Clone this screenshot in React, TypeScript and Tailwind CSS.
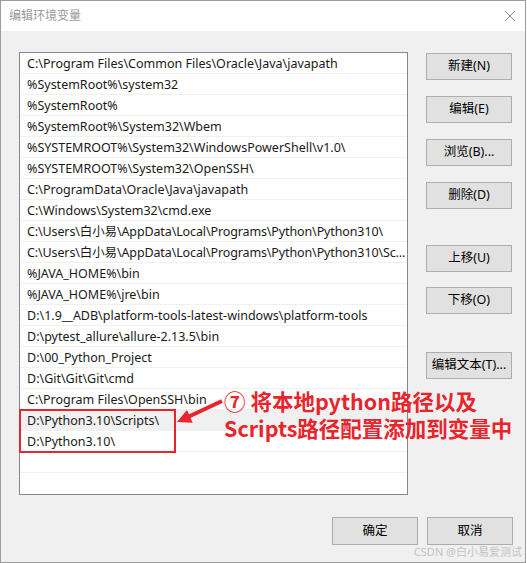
import React from "react";

const rows = [
  "C:\\Program Files\\Common Files\\Oracle\\Java\\javapath",
  "%SystemRoot%\\system32",
  "%SystemRoot%",
  "%SystemRoot%\\System32\\Wbem",
  "%SYSTEMROOT%\\System32\\WindowsPowerShell\\v1.0\\",
  "%SYSTEMROOT%\\System32\\OpenSSH\\",
  "C:\\ProgramData\\Oracle\\Java\\javapath",
  "C:\\Windows\\System32\\cmd.exe",
  "C:\\Users\\白小易\\AppData\\Local\\Programs\\Python\\Python310\\",
  "C:\\Users\\白小易\\AppData\\Local\\Programs\\Python\\Python310\\Sc...",
  "%JAVA_HOME%\\bin",
  "%JAVA_HOME%\\jre\\bin",
  "D:\\1.9__ADB\\platform-tools-latest-windows\\platform-tools",
  "D:\\pytest_allure\\allure-2.13.5\\bin",
  "D:\\00_Python_Project",
  "D:\\Git\\Git\\Git\\cmd",
  "C:\\Program Files\\OpenSSH\\bin",
  "D:\\Python3.10\\Scripts\\",
  "D:\\Python3.10\\",
  "",
];

function Btn({ label, className = "" }: { label: string; className?: string }) {
  return (
    <div
      className={`w-[86px] h-[27px] border border-[#adadad] bg-[#e1e1e1] flex items-center justify-center text-[12.5px] text-black ${className}`}
    >
      {label}
    </div>
  );
}

export default function App() {
  return (
    <div
      className="w-[527px] h-[563px] bg-white relative overflow-hidden"
      style={{ fontFamily: '"Noto Sans", "Noto Sans CJK SC", sans-serif' }}
    >
      <div className="w-[526px] h-[563px] border border-[#9c9c9c] flex flex-col bg-[#f0f0f0] relative">
        <div className="h-[30px] bg-white flex items-center justify-between pl-[8px] pr-[8px]">
          <span className="text-[12px] text-[#9a9a9a]">编辑环境变量</span>
          <svg width="12" height="12" viewBox="0 0 12 12" className="mr-[1px]">
            <path d="M1 1 L11 11 M11 1 L1 11" stroke="#8a8a8a" strokeWidth="1" fill="none" />
          </svg>
        </div>
        <div className="flex pl-[18px] pt-[21px] pr-[12px]">
          <div className="w-[389px] h-[443px] border border-[#828790] bg-white overflow-hidden">
            {rows.map((r, i) => (
              <div
                key={i}
                className={`h-[21px] border-b border-[#f0f0f0] pl-[7px] pt-[2px] flex items-center text-[12.5px] text-[#1a1a1a] whitespace-nowrap overflow-hidden ${
                  i === 17 ? "bg-[#f0f0f0]" : ""
                } ${i === 8 || i === 9 ? "tracking-[-0.12px]" : ""}`}
              >
                {r}
              </div>
            ))}
          </div>
          <div className="ml-[18px] flex flex-col pt-[1px]">
            <Btn label="新建(N)" />
            <Btn label="编辑(E)" className="mt-[16px]" />
            <Btn label="浏览(B)..." className="mt-[16px]" />
            <Btn label="删除(D)" className="mt-[16px]" />
            <Btn label="上移(U)" className="mt-[36px]" />
            <Btn label="下移(O)" className="mt-[15px]" />
            <Btn label="编辑文本(T)..." className="mt-[38px]" />
          </div>
        </div>
        <div className="flex justify-end gap-[9px] pr-[12px] mt-[22px]">
          <Btn label="确定" className="h-[28px]" />
          <Btn label="取消" className="h-[28px]" />
        </div>
        <div className="absolute right-[3px] bottom-[3px] text-[11px] leading-[14px] text-[#c4c4c4]">
          CSDN @白小易爱测试
        </div>
      </div>

      {/* annotation overlay */}
      <div className="absolute left-[19px] top-[409px] w-[157px] h-[44px] border-2 border-[#e8242c]" />
      <svg className="absolute left-0 top-0" width="527" height="563" viewBox="0 0 527 563">
        <line x1="222" y1="401" x2="189" y2="416.5" stroke="#e8242c" strokeWidth="4" />
        <polygon points="177,422 187,409.9 192.7,422.7" fill="#e8242c" />
      </svg>
      <div
        className="absolute left-[224px] top-[387px] text-[21.5px] font-bold text-[#e8242c] whitespace-nowrap flex flex-col"
        style={{ fontFamily: '"Noto Sans CJK SC", sans-serif' }}
      >
        <span className="leading-[27px] h-[27px] block">⑦ 将本地python路径以及</span>
        <span className="leading-[27px] h-[27px] block">Scripts路径配置添加到变量中</span>
      </div>
    </div>
  );
}
